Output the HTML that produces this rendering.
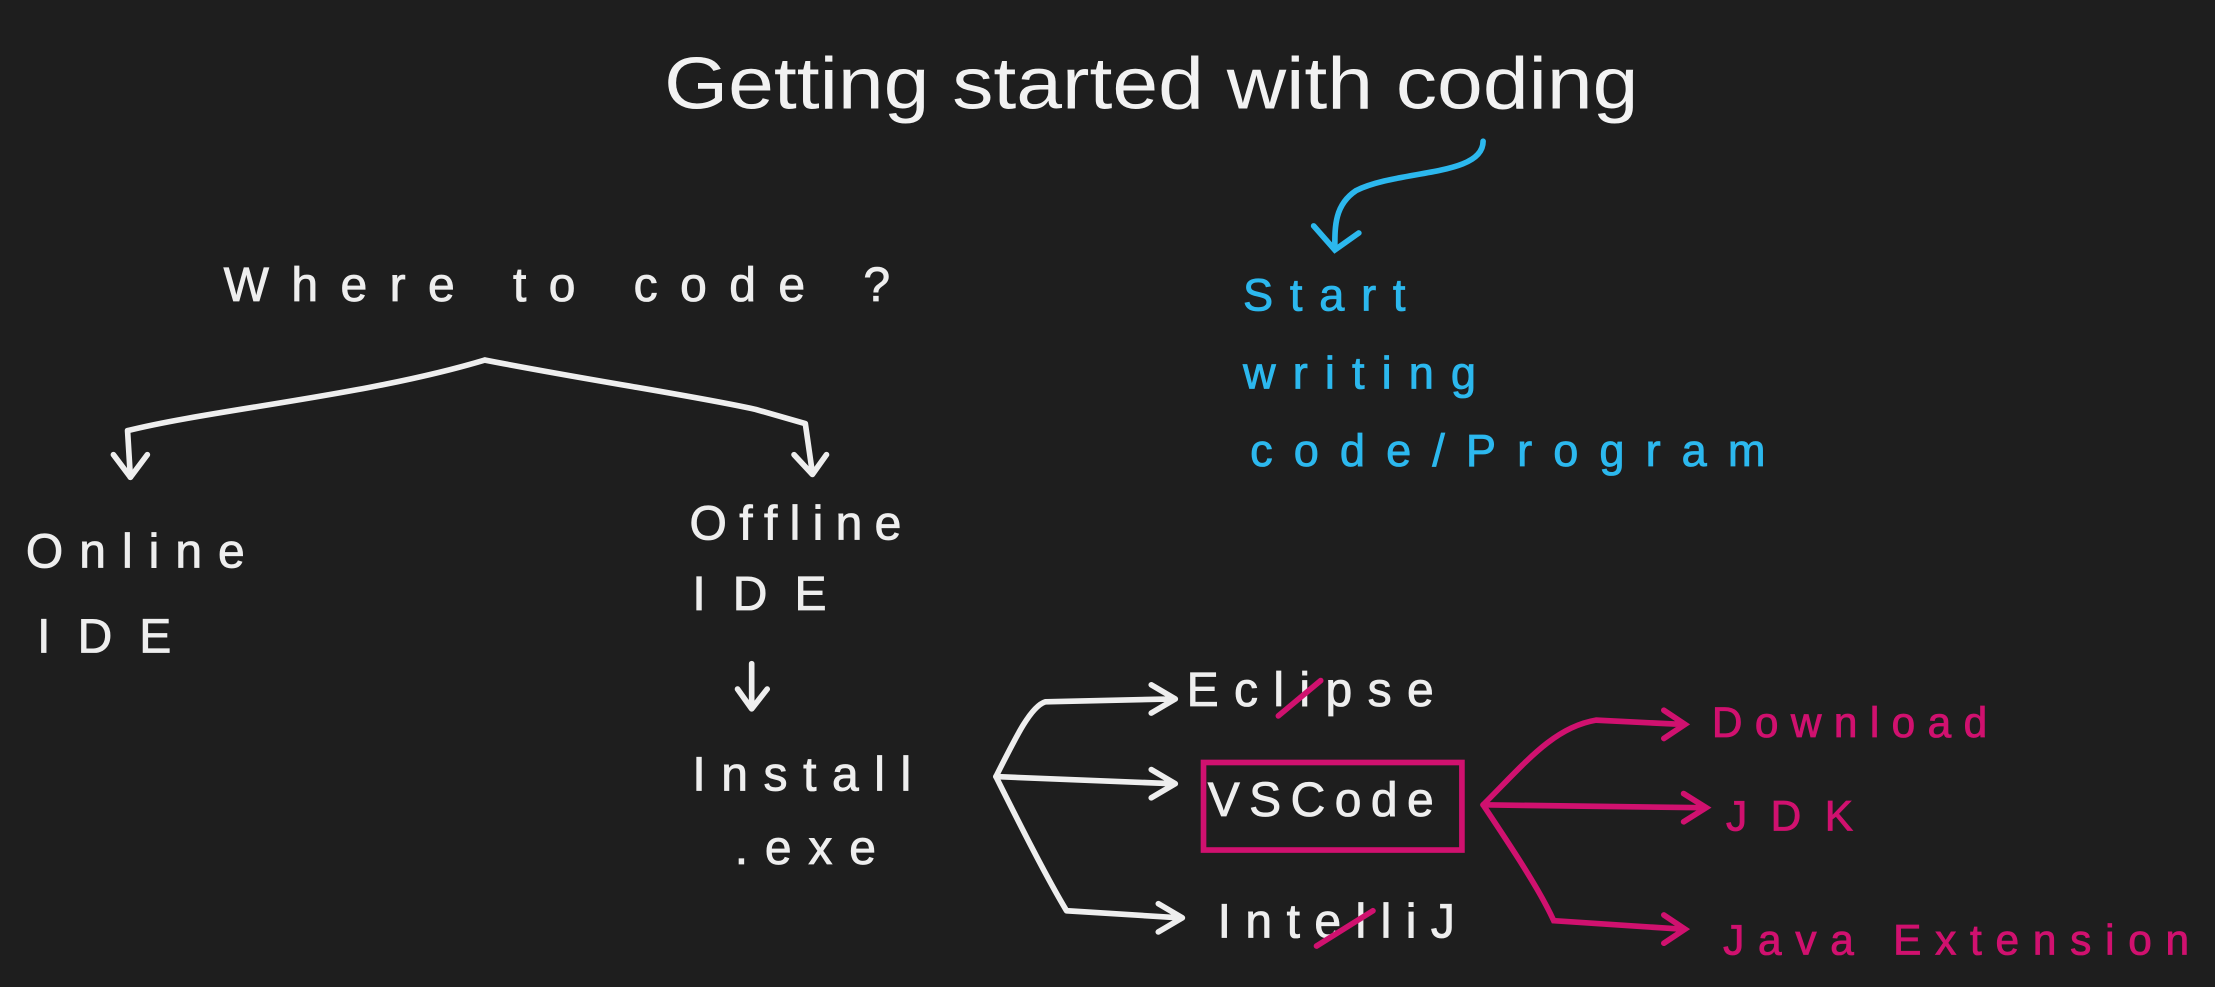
<!DOCTYPE html>
<html><head><meta charset="utf-8"><style>
html,body{margin:0;padding:0;background:#1e1e1e;width:2215px;height:987px;overflow:hidden}
svg{display:block}
text{font-family:"Liberation Sans",sans-serif}
</style></head><body>
<svg width="2215" height="987" viewBox="0 0 1568 699" xmlns="http://www.w3.org/2000/svg">
<rect width="1568" height="699" fill="#1e1e1e"/>
<text x="815" y="77" fill="#f2f2f2" font-size="52" text-anchor="middle" textLength="690" lengthAdjust="spacingAndGlyphs">Getting started with coding</text>
<g fill="#eeeeee" font-size="34" stroke="#eeeeee" stroke-width="0.6">
<text x="158" y="213" textLength="472" lengthAdjust="spacing">Where to code ?</text>
<text x="18" y="402" textLength="155" lengthAdjust="spacing">Online</text>
<text x="26" y="462" textLength="95" lengthAdjust="spacing">IDE</text>
<text x="488" y="382" textLength="150" lengthAdjust="spacing">Offline</text>
<text x="490" y="432" textLength="95" lengthAdjust="spacing">IDE</text>
<text x="490" y="560" textLength="155" lengthAdjust="spacing">Install</text>
<text x="520" y="612" textLength="100" lengthAdjust="spacing">.exe</text>
<text x="840" y="500" textLength="175" lengthAdjust="spacing">Eclipse</text>
<text x="855" y="578" textLength="160" lengthAdjust="spacing">VSCode</text>
<text x="862" y="664" textLength="168" lengthAdjust="spacing">IntelliJ</text>
</g>
<g fill="none" stroke="#eeeeee" stroke-width="4" stroke-linecap="round" stroke-linejoin="round">
<path d="M343 255 C260 280 150 290 90 305 L92 338"/>
<path d="M80 322 L92 338 L104 322"/>
<path d="M343 255 C420 270 490 280 535 290 L570 300 L575 335"/>
<path d="M562 322 L575 336 L585 322"/>
<path d="M532 470 L532 500 M522 488 L532 502 L543 488"/>
<path d="M705 550 C720 520 730 500 740 497 L830 495 M815 485 L832 495 L815 505"/>
<path d="M705 550 L830 555 M815 545 L832 555 L815 565"/>
<path d="M705 550 C720 580 740 620 755 645 L835 650 M820 640 L837 650 L820 660"/>
</g>
<g fill="none" stroke="#d0116f" stroke-width="4" stroke-linecap="round">
<rect x="852" y="540" width="183" height="62"/>
<path d="M905 507 L935 482"/>
<path d="M932 670 L972 645"/>
<path d="M1050 570 C1080 540 1100 515 1130 510 L1190 513 M1178 503 L1193 513 L1178 523"/>
<path d="M1050 570 L1205 572 M1192 562 L1208 572 L1192 582"/>
<path d="M1050 570 C1070 600 1090 630 1100 652 L1190 658 M1178 648 L1193 658 L1178 668"/>
</g>
<g fill="#d0116f" font-size="30" stroke="#d0116f" stroke-width="0.6">
<text x="1212" y="522" textLength="195" lengthAdjust="spacing">Download</text>
<text x="1222" y="588" textLength="90" lengthAdjust="spacing">JDK</text>
<text x="1220" y="676" textLength="330" lengthAdjust="spacing">Java Extension</text>
</g>
<g fill="none" stroke="#2cb8ee" stroke-width="4" stroke-linecap="round">
<path d="M1050 100 C1050 125 990 120 960 135 C945 145 945 160 945 175"/>
<path d="M930 160 L945 177 L962 165"/>
</g>
<g fill="#2cb8ee" font-size="32" stroke="#2cb8ee" stroke-width="0.6">
<text x="880" y="220" textLength="115" lengthAdjust="spacing">Start</text>
<text x="880" y="275" textLength="165" lengthAdjust="spacing">writing</text>
<text x="885" y="330" textLength="365" lengthAdjust="spacing">code/Program</text>
</g>
</svg>
</body></html>
